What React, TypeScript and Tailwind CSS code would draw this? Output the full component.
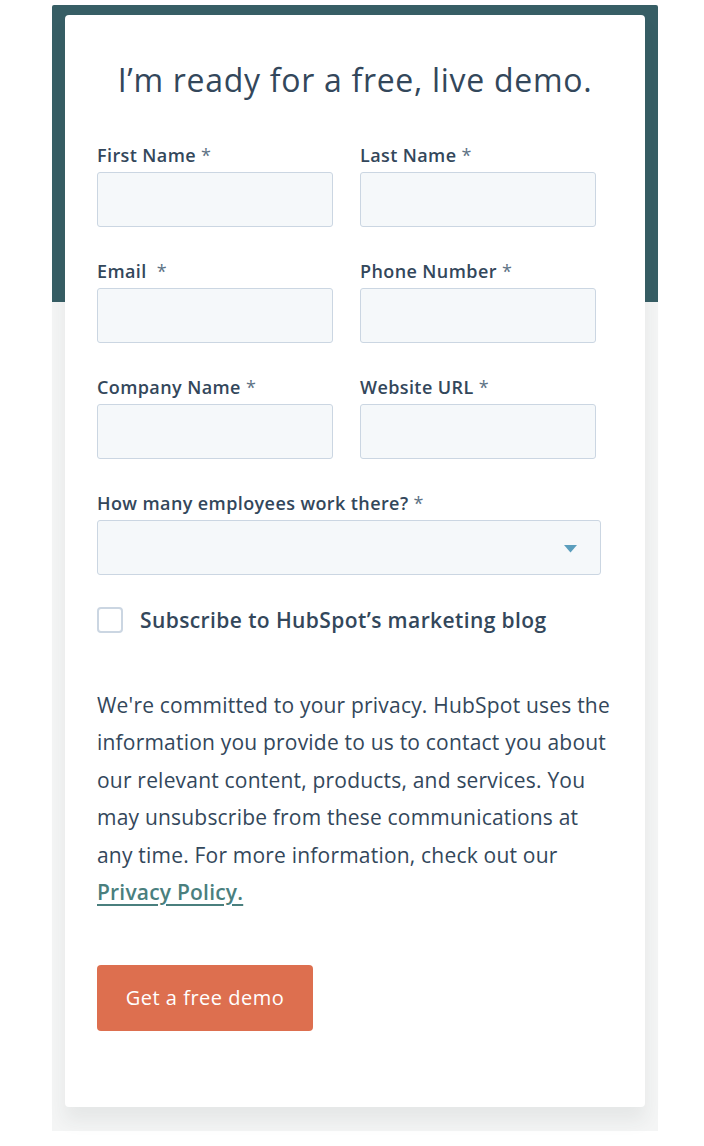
import { ChangeEvent, useState } from 'react';

const fields = [
  ['First Name', 'Last Name'],
  ['Email ', 'Phone Number'],
  ['Company Name', 'Website URL'],
];

const Field = ({ label }: { label: string }) => (
  <label className="flex flex-col">
    <span className="text-[18px] leading-[22px] tracking-[0.4px] font-semibold text-[#33475b] mb-[6px] whitespace-pre">
      {label} <span className="text-[#5d7285] font-normal">*</span>
    </span>
    <input
      type="text"
      className="h-[55px] w-full rounded-[3px] border border-[#cbd6e2] bg-[#f5f8fa] px-3 outline-none"
    />
  </label>
);

const App = () => {
  const [subscribed, setSubscribed] = useState(false);

  return (
    <div className="min-h-screen bg-white pt-[5px] font-['Open_Sans',sans-serif]">
      {/* Framed form */}
      <div className="ml-[52px] w-[606px] px-[13px] pt-[10px] pb-[24px] rounded-t-[2px] bg-[linear-gradient(to_bottom,#375e65_297px,#f4f5f5_297px)]">
        <div className="bg-white rounded-[4px] px-[32px] pt-[46px] pb-[76px] shadow-[0_14px_18px_rgba(40,50,60,0.07)]">
          <h2 className="text-center text-[32px] leading-[38px] tracking-[0.7px] font-normal text-[#33475b] mb-[45px]">
            I’m ready for a free, live demo.
          </h2>

          <div className="flex flex-col gap-[33px] w-[499px]">
            {fields.map((row) => (
              <div key={row[0]} className="grid grid-cols-2 gap-[27px]">
                <Field label={row[0]} />
                <Field label={row[1]} />
              </div>
            ))}
          </div>

          <label className="flex flex-col mt-[33px] w-[504px]">
            <span className="text-[18px] leading-[22px] tracking-[0.4px] font-semibold text-[#33475b] mb-[6px]">
              How many employees work there? <span className="text-[#5d7285] font-normal">*</span>
            </span>
            <div className="relative h-[55px] rounded-[3px] border border-[#cbd6e2] bg-[#f5f8fa]">
              <svg
                className="absolute right-[23px] top-[24px]"
                width="13"
                height="8"
                viewBox="0 0 13 8"
              >
                <path d="M0 0h13L6.5 7.5z" fill="#5b9ebd" />
              </svg>
            </div>
          </label>

          <label className="flex items-center gap-[17px] mt-[32px] cursor-pointer">
            <input
              type="checkbox"
              checked={subscribed}
              onChange={(e: ChangeEvent<HTMLInputElement>) => setSubscribed(e.target.checked)}
              className="appearance-none w-[26px] h-[26px] rounded-[4px] border-2 border-[#cbd6e2] bg-white"
            />
            <span className="text-[21px] leading-[26px] tracking-[0.4px] font-semibold text-[#33475b]">
              Subscribe to HubSpot’s marketing blog
            </span>
          </label>

          <p className="mt-[54px] text-[21px] leading-[37.4px] tracking-[0.2px] text-[#33475b]">
            We're committed to your privacy. HubSpot uses the
            <br />
            information you provide to us to contact you about
            <br />
            our relevant content, products, and services. You
            <br />
            may unsubscribe from these communications at
            <br />
            any time. For more information, check out our
            <br />
            <a
              href="#"
              className="font-semibold text-[#4a7f7e] underline decoration-[1.5px] underline-offset-[4px]"
            >
              Privacy Policy.
            </a>
          </p>

          <button className="mt-[54px] h-[66px] w-[216px] rounded-[4px] bg-[#dd6f4f] text-white text-[20px] tracking-[0.5px] font-medium">
            Get a free demo
          </button>
        </div>
      </div>
    </div>
  );
};

export default App;
